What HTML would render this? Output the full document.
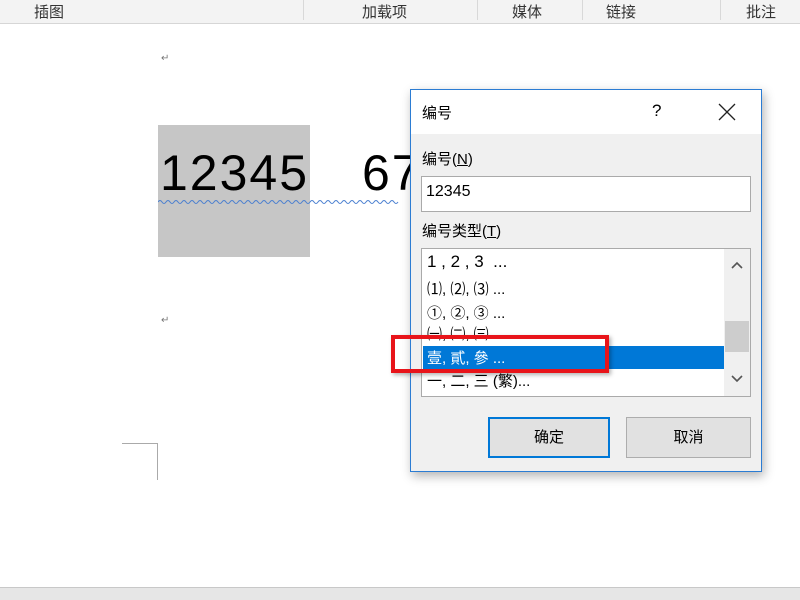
<!DOCTYPE html>
<html><head><meta charset="utf-8"><style>
*{margin:0;padding:0;box-sizing:border-box}
body{width:800px;height:600px;overflow:hidden;background:#fff;position:relative;font-family:"Liberation Sans","Noto Sans CJK SC",sans-serif;color:#000}
.a{position:absolute}
.rib{left:0;top:0;width:800px;height:24px;background:#f3f3f3;border-bottom:1px solid #d6d6d6;font-size:15px;color:#333}
.rib span{position:absolute;top:1px}
.sep{position:absolute;top:0;width:1px;height:20px;background:#d8d8d8}
.mark{font-size:10px;color:#777}
.dlg{left:410px;top:89px;width:352px;height:383px;background:#f0f0f0;border:1px solid #2b7cd3;box-shadow:2px 4px 10px rgba(0,0,0,.3)}
.t{font-size:15px}
</style></head><body>
<div class="a rib">
<span style="left:34px">插图</span>
<div class="sep" style="left:303px"></div>
<span style="left:362px">加载项</span>
<div class="sep" style="left:477px"></div>
<span style="left:512px">媒体</span>
<div class="sep" style="left:582px"></div>
<span style="left:606px">链接</span>
<div class="sep" style="left:720px"></div>
<span style="left:746px">批注</span>
</div>
<div class="a mark" style="left:161px;top:53px">↵</div>
<div class="a mark" style="left:161px;top:315px">↵</div>
<div class="a" style="left:158px;top:125px;width:152px;height:132px;background:#c6c6c6"></div>
<div class="a" style="left:160px;top:141px;font-size:50px;line-height:64px;letter-spacing:2px">12345</div>
<div class="a" style="left:362px;top:141px;font-size:50px;line-height:64px;letter-spacing:2px">67</div>
<svg class="a" style="left:158px;top:199px" width="252" height="6"><path d="M0 3 q2 -3 4 0 t4 0 t4 0 t4 0 t4 0 t4 0 t4 0 t4 0 t4 0 t4 0 t4 0 t4 0 t4 0 t4 0 t4 0 t4 0 t4 0 t4 0 t4 0 t4 0 t4 0 t4 0 t4 0 t4 0 t4 0 t4 0 t4 0 t4 0 t4 0 t4 0 t4 0 t4 0 t4 0 t4 0 t4 0 t4 0 t4 0 t4 0 t4 0 t4 0 t4 0 t4 0 t4 0 t4 0 t4 0 t4 0 t4 0 t4 0 t4 0 t4 0 t4 0 t4 0 t4 0 t4 0 t4 0 t4 0 t4 0 t4 0 t4 0 t4 0" fill="none" stroke="#4a7fd0" stroke-width="1"/></svg>
<div class="a" style="left:122px;top:443px;width:36px;height:37px;border-top:1px solid #aaa;border-right:1px solid #aaa"></div>
<div class="a" style="left:0;top:587px;width:800px;height:13px;background:#e6e6e6;border-top:1px solid #c8c8c8"></div>

<div class="a dlg">
 <div class="a" style="left:0;top:0;width:350px;height:44px;background:#fff"></div>
 <div class="a t" style="left:11px;top:12px">编号</div>
 <div class="a t" style="left:241px;top:11px;font-size:17px">?</div>
 <svg class="a" style="left:307px;top:13px" width="18" height="18"><path d="M1 1L17 17M17 1L1 17" stroke="#222" stroke-width="1.3"/></svg>
 <div class="a t" style="left:11px;top:58px">编号(<u>N</u>)</div>
 <div class="a" style="left:10px;top:86px;width:330px;height:36px;background:#fff;border:1px solid #aaa;font-size:16px;padding:6px 4px">12345</div>
 <div class="a t" style="left:11px;top:130px">编号类型(<u>T</u>)</div>
 <div class="a" style="left:10px;top:158px;width:330px;height:149px;background:#fff;border:1px solid #aaa;overflow:hidden;font-size:15px">
  <div class="a" style="left:5px;top:3px;font-size:17px">1 , 2 , 3 &nbsp;...</div>
  <div class="a" style="left:5px;top:29px">⑴, ⑵, ⑶ ...</div>
  <div class="a" style="left:5px;top:53px">①, ②, ③ ...</div>
  <div class="a" style="left:5px;top:74px">㈠, ㈡, ㈢ ...</div>
  <div class="a" style="left:1px;top:97px;width:301px;height:23px;background:#0078d7;color:#fff;padding:1px 4px">壹, 貳, 參 ...</div>
  <div class="a" style="left:5px;top:121px">一, 二, 三 (繁)...</div>
  <div class="a" style="left:302px;top:0;width:26px;height:147px;background:#f0f0f0"></div>
  <div class="a" style="left:303px;top:72px;width:24px;height:31px;background:#cdcdcd"></div>
  <svg class="a" style="left:309px;top:12px" width="12" height="8"><path d="M1 7L6 2L11 7" fill="none" stroke="#555" stroke-width="1.6"/></svg>
  <svg class="a" style="left:309px;top:126px" width="12" height="8"><path d="M1 1L6 6L11 1" fill="none" stroke="#555" stroke-width="1.6"/></svg>
 </div>
 <div class="a" style="left:-20px;top:245px;width:218px;height:38px;border:4px solid #e8141a;box-shadow:2px 2px 4px rgba(0,0,0,.3)"></div>
 <div class="a t" style="left:77px;top:327px;width:122px;height:41px;background:#e1e1e1;border:2px solid #0078d7;text-align:center;line-height:37px">确定</div>
 <div class="a t" style="left:215px;top:327px;width:125px;height:41px;background:#e1e1e1;border:1px solid #adadad;text-align:center;line-height:39px">取消</div>
</div>
</body></html>
